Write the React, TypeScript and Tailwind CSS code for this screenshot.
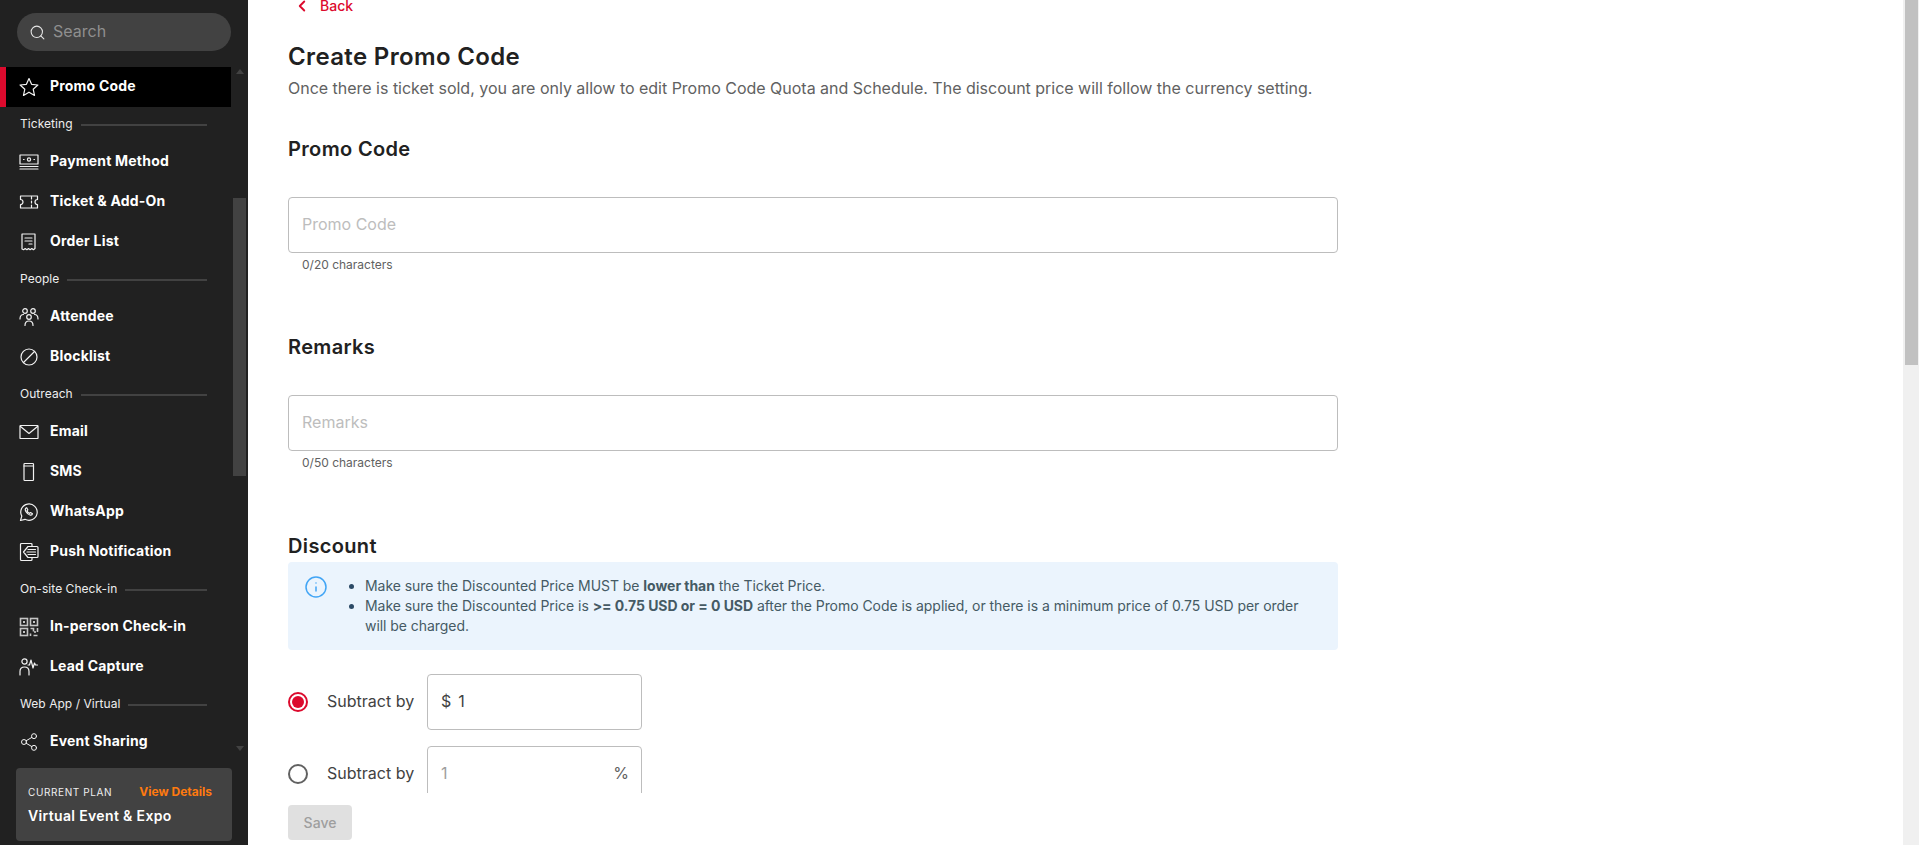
/** Create Promo Code page: dark sidebar with nav sections + scrolling form panel. */
import { ChevronLeft, Search, Info, Share2 } from 'lucide-react'
import type { ReactNode } from 'react'

const font = "font-['Inter','Noto_Sans',sans-serif]"

function Svg({ children }: { children: ReactNode }) {
  return (
    <svg width="20" height="20" viewBox="0 0 20 20" fill="none" stroke="currentColor" strokeWidth="1.2" strokeLinecap="round" strokeLinejoin="round">
      {children}
    </svg>
  )
}

const StarIcon = () => (
  <Svg>
    <path d="M10 1.500l2.600 5.800 6.300.7-4.700 4.200 1.300 6.200L10 15.200l-5.500 3.200 1.300-6.200L1.100 8l6.300-.7z" />
  </Svg>
)
const PaymentIcon = () => (
  <Svg>
    <rect x="1" y="3" width="18" height="9" />
    <circle cx="10" cy="7.500" r="1.600" />
    <path d="M4.500 7.500h.6M14.900 7.500h.6M1 14.500h18M1 17h18" />
  </Svg>
)
const TicketIcon = () => (
  <Svg>
    <path d="M1.500 4h17v3.500a2.500 2.500 0 0 0 0 5V16h-17v-3.500a2.500 2.500 0 0 0 0-5z" />
    <path d="M12.500 4.500v2.500M12.500 9v2M12.500 13v2.500" />
  </Svg>
)
const OrderIcon = () => (
  <Svg>
    <path d="M3 2h13v14.500l-1.600 1.200-1.600-1.200-1.700 1.200-1.600-1.200-1.600 1.200-1.700-1.200-1.600 1.200L3 17z" />
    <path d="M6 6h7M6 9h7M10 12h3" />
  </Svg>
)
const AttendeeIcon = () => (
  <Svg>
    <circle cx="6" cy="4" r="2.300" />
    <circle cx="14" cy="4" r="2.300" />
    <circle cx="10" cy="10" r="2.300" />
    <path d="M1 12c0-3 1.500-4.500 3.500-4.500M19 12c0-3-1.500-4.500-3.500-4.500M6 18.500c0-3 1.500-4.500 4-4.500s4 1.500 4 4.500" />
  </Svg>
)
const BlockIcon = () => (
  <Svg>
    <circle cx="10" cy="10" r="8" />
    <path d="M4.500 15.500L15.500 4.500" />
  </Svg>
)
const MailIcon = () => (
  <Svg>
    <rect x="1" y="3.500" width="18" height="13" rx="0.6" />
    <path d="M1.500 4.500L10 11.500l8.500-7" />
  </Svg>
)
const PhoneIcon = () => (
  <Svg>
    <rect x="5" y="1.500" width="9.500" height="17" rx="0.8" />
    <path d="M5 4h9.500" />
  </Svg>
)
const WhatsAppIcon = () => (
  <Svg>
    <path d="M1.500 18.500l1.300-4.400A8.200 8.200 0 1 1 6 17.300z" />
    <path d="M7 6c-1 .8-1 2 0 3.700 1.100 1.900 2.600 3 4.300 3.400 1.100.2 2-.4 2.200-1.400l-2-1.200-1 .9c-1-.4-2-1.400-2.500-2.600l.8-1-1.100-2.100z" />
  </Svg>
)
const PushIcon = () => (
  <Svg>
    <path d="M13 4V2.500A1 1 0 0 0 12 1.500H2.500a1 1 0 0 0-1 1v15a1 1 0 0 0 1 1H12a1 1 0 0 0 1-1V16" />
    <path d="M9 4.500h9a1 1 0 0 1 1 1v9a1 1 0 0 1-1 1H9L4.500 10z" />
    <path d="M9 7.500h7.500M8 10h8.500M9 12.500h7.500" />
  </Svg>
)
const QrIcon = () => (
  <svg width="20" height="20" viewBox="0 0 20 20" fill="none" stroke="#c4c4c4" strokeWidth="1.600">
    <rect x="1.500" y="1.500" width="7" height="7" />
    <rect x="11.500" y="1.500" width="7" height="7" />
    <rect x="1.500" y="11.500" width="7" height="7" />
    <rect x="4" y="4" width="2" height="2" fill="#c4c4c4" stroke="none" />
    <rect x="14" y="4" width="2" height="2" fill="#c4c4c4" stroke="none" />
    <rect x="4" y="14" width="2" height="2" fill="#c4c4c4" stroke="none" />
    <path d="M11.500 11.500h3v3M18.500 11v4M11.500 16.500v2.500M14.500 18.500h4M16 14v2" />
  </svg>
)
const LeadIcon = () => (
  <Svg>
    <circle cx="5.500" cy="4.500" r="2.600" />
    <path d="M1 18v-3.500C1 11.500 3 10 5.500 10S10 11.500 10 14.500V18" />
    <path d="M9 8h1.500l1.500-5 2 8 1.500-5 1 2h2" />
  </Svg>
)

function Row({ icon, label, active }: { icon: ReactNode; label: string; active?: boolean }) {
  return (
    <div className={`h-10 flex items-center gap-[11px] pl-[13px] border-l-[6px] shrink-0 ${active ? 'bg-black border-[#dc0a2d]' : 'border-transparent'}`}>
      <span className="w-5 h-5 flex items-center justify-center text-[#f2f2f2]">{icon}</span>
      <span className="pb-0.5 text-sm font-bold text-white tracking-[0.2px]">{label}</span>
    </div>
  )
}

function Section({ label }: { label: string }) {
  return (
    <div className="h-[35px] flex items-center gap-2 pl-5 pr-[24px] shrink-0">
      <span className="pb-0.5 text-xs tracking-[0.05px] text-[#eeeeee] whitespace-nowrap">{label}</span>
      <span className="flex-1 h-0.5 bg-[#424242]" />
    </div>
  )
}

function Sidebar() {
  return (
    <aside className="w-[248px] h-full shrink-0 bg-[#212121] flex flex-col">
      <div className="px-[17px] pt-[13px]">
        <div className="h-[38px] w-[214px] rounded-full bg-[#424242] flex items-center pl-[12px] gap-[7px]">
          <Search size={17} strokeWidth={1.5} className="text-[#e6e6e6]" />
          <span className="pb-0.5 text-base text-[#8f8f8f]">Search</span>
        </div>
      </div>

      <div className="mt-4 h-[694px] flex overflow-hidden">
        <nav className="w-[231px] flex flex-col shrink-0">
          <Row active icon={<StarIcon />} label="Promo Code" />
          <Section label="Ticketing" />
          <Row icon={<PaymentIcon />} label="Payment Method" />
          <Row icon={<TicketIcon />} label="Ticket & Add-On" />
          <Row icon={<OrderIcon />} label="Order List" />
          <Section label="People" />
          <Row icon={<AttendeeIcon />} label="Attendee" />
          <Row icon={<BlockIcon />} label="Blocklist" />
          <Section label="Outreach" />
          <Row icon={<MailIcon />} label="Email" />
          <Row icon={<PhoneIcon />} label="SMS" />
          <Row icon={<WhatsAppIcon />} label="WhatsApp" />
          <Row icon={<PushIcon />} label="Push Notification" />
          <Section label="On-site Check-in" />
          <Row icon={<QrIcon />} label="In-person Check-in" />
          <Row icon={<LeadIcon />} label="Lead Capture" />
          <Section label="Web App / Virtual" />
          <Row icon={<Share2 size={20} strokeWidth={1.2} />} label="Event Sharing" />
        </nav>
        {/* sidebar scrollbar */}
        <div className="ml-[2px] w-[13px] flex flex-col items-center">
          <div className="mt-[2px] w-0 h-0 border-x-[4px] border-x-transparent border-b-[5px] border-b-[#424242]" />
          <div className="mt-[124px] w-[13px] h-[278px] bg-[#424242]" />
          <div className="mt-[270px] w-0 h-0 border-x-[4px] border-x-transparent border-t-[5px] border-t-[#424242]" />
        </div>
      </div>

      <div className="mt-[7px] ml-4 w-[216px] h-[73px] rounded bg-[#424242] px-3 pt-[16px]">
        <div className="flex items-center justify-between pr-[8px]">
          <span className="text-[10px] leading-4 tracking-[0.6px] text-[#eeeeee]">CURRENT PLAN</span>
          <span className="text-xs leading-4 font-bold text-[#ff7a0f]">View Details</span>
        </div>
        <div className="mt-[6px] text-sm leading-5 font-semibold tracking-[0.35px] text-white">Virtual Event &amp; Expo</div>
      </div>
    </aside>
  )
}

function Field({ placeholder, count }: { placeholder: string; count: string }) {
  return (
    <>
      <input
        placeholder={placeholder}
        className="mt-[34px] h-14 w-full rounded border border-[#bdbdbd] px-[13px] pb-0.5 text-base text-[#212121] placeholder:text-[#bdbdbd] outline-none"
      />
      <div className="mt-1 pl-[14px] text-xs leading-4 text-[#616161]">{count}</div>
    </>
  )
}

function Radio({ checked }: { checked?: boolean }) {
  return (
    <span className={`w-5 h-5 rounded-full border-2 flex items-center justify-center shrink-0 ${checked ? 'border-[#dc0a2d]' : 'border-[#616161]'}`}>
      {checked && <span className="w-3 h-3 rounded-full bg-[#dc0a2d]" />}
    </span>
  )
}

export default function App() {
  return (
    <div className={`h-screen w-full flex overflow-hidden bg-white ${font}`}>
      <Sidebar />
      <main className="flex-1 min-w-0 h-full flex flex-col pl-10">
        <div className="h-[793px] w-[1050px] overflow-hidden shrink-0">
          <div className="h-3 flex items-center gap-[9px] pl-[5px] text-sm font-medium text-[#dc0a2d]">
            <ChevronLeft size={18} strokeWidth={2.5} />
            <span>Back</span>
          </div>
          <h1 className="mt-[29px] text-2xl leading-8 font-semibold tracking-[0.35px] text-[#212121]">Create Promo Code</h1>
          <p className="mt-[3px] text-base leading-6 tracking-[-0.015px] text-[#616161]">
            Once there is ticket sold, you are only allow to edit Promo Code Quota and Schedule. The discount price will follow the currency setting.
          </p>

          <h2 className="mt-[35px] text-xl leading-7 font-semibold tracking-[0.35px] text-[#212121]">Promo Code</h2>
          <Field placeholder="Promo Code" count="0/20 characters" />

          <h2 className="mt-[60px] text-xl leading-7 font-semibold tracking-[0.35px] text-[#212121]">Remarks</h2>
          <Field placeholder="Remarks" count="0/50 characters" />

          <h2 className="mt-[61px] text-xl leading-7 font-semibold tracking-[0.35px] text-[#212121]">Discount</h2>
          <div className="mt-[2px] h-[88px] rounded bg-[#ebf4fd] flex pl-[16px] pr-[16px] pt-[13px]">
            <Info size={24} strokeWidth={1.5} className="text-[#42a5f5] shrink-0" />
            <ul className="ml-[37px] list-disc pt-px text-sm leading-5 tracking-[-0.05px] text-[#455a64] marker:text-[#2c4a66]">
              <li>Make sure the Discounted Price MUST be <b className="font-bold">lower than</b> the Ticket Price.</li>
              <li>Make sure the Discounted Price is <b className="font-bold">&gt;= 0.75 USD or = 0 USD</b> after the Promo Code is applied, or there is a minimum price of 0.75 USD per order will be charged.</li>
            </ul>
          </div>

          <div className="mt-6 flex items-center">
            <Radio checked />
            <span className="ml-[19px] pb-0.5 w-[100px] text-base text-[#424242]">Subtract by</span>
            <div className="w-[215px] h-14 rounded border border-[#bdbdbd] px-[13px] pb-0.5 flex items-center gap-[7px] text-base text-[#424242]">
              <span>$</span>
              <span>1</span>
            </div>
          </div>
          <div className="mt-4 flex items-start">
            <span className="mt-[18px] flex"><Radio /></span>
            <span className="ml-[19px] mt-[15px] w-[100px] text-base text-[#424242]">Subtract by</span>
            <div className="w-[215px] h-14 rounded border border-[#bdbdbd] pl-[13px] pr-[12px] pb-0.5 flex items-center justify-between text-base">
              <span className="text-[#9e9e9e]">1</span>
              <span className="text-[#616161]">%</span>
            </div>
          </div>
        </div>
        <div className="mt-3">
          <button className="w-16 h-[35px] rounded bg-[#e0e0e0] text-sm font-medium text-[#9e9e9e]">Save</button>
        </div>
      </main>
      {/* page scrollbar */}
      <div className="w-4 h-full shrink-0 bg-[#f0f0f0] pl-[2px] pr-px">
        <div className="h-[365px] bg-[#c1c1c1]" />
      </div>
    </div>
  )
}
